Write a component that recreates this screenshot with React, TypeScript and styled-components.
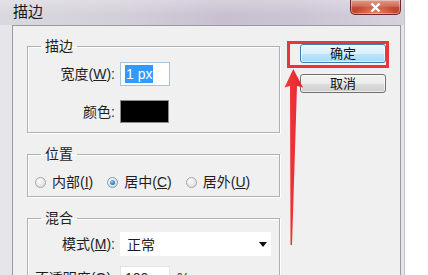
import React from 'react';
import styled, { createGlobalStyle, css } from 'styled-components';

const GlobalStyle = createGlobalStyle`
  html, body {
    margin: 0;
    padding: 0;
    background: #ffffff;
  }
  body {
    font-family: 'Liberation Sans', 'Noto Sans CJK SC', sans-serif;
    color: #1e1e1e;
  }
`;

const Page = styled.div`
  position: relative;
  width: 428px;
  height: 275px;
  overflow: hidden;
  background: #ffffff;
`;

const Window = styled.div`
  width: 404px;
  height: 300px;
  display: flex;
  flex-direction: column;
  background: #e6e5ea;
  border-right: 1px solid #c4c3cb;
`;

const TitleBar = styled.div`
  height: 26px;
  display: flex;
  align-items: flex-start;
  background:
    linear-gradient(180deg, rgba(255, 255, 255, 0.25) 0%, rgba(255, 255, 255, 0) 60%),
    linear-gradient(90deg, #d9d8df 0%, #d3cfd9 30%, #c8c0d1 55%, #cbc4d4 75%, #d6d2dd 100%);
`;

const Title = styled.div`
  padding: 3px 0 0 13px;
  font-size: 15px;
  line-height: 18px;
  color: #1a1a1a;
`;

const CloseButton = styled.div`
  margin-left: auto;
  margin-right: 3px;
  width: 49px;
  height: 14px;
  display: flex;
  align-items: center;
  justify-content: center;
  border: 1px solid #6e2a22;
  border-top: none;
  border-radius: 0 0 5px 5px;
  background:
    radial-gradient(ellipse at 50% 110%, rgba(255, 170, 120, 0.7) 0%, rgba(255, 170, 120, 0) 60%),
    linear-gradient(180deg, #dba091 0%, #cf6a55 45%, #c2452f 55%, #c24a33 100%);
  box-shadow: inset 0 0 0 1px rgba(255, 255, 255, 0.35);
`;

const Frame = styled.div`
  flex: 1;
  padding: 0 3px 0 12px;
`;

const DialogBody = styled.div`
  height: 100%;
  display: flex;
  align-items: flex-start;
  gap: 20px;
  padding: 12px 14px 0 14px;
  background: #f0f0f0;
  border: 1px solid #9a9a9e;
  box-sizing: border-box;
`;

const LeftColumn = styled.div`
  width: 254px;
  display: flex;
  flex-direction: column;
  gap: 13px;
`;

const Group = styled.fieldset<{ $pt: number; $pb: number }>`
  margin: 0;
  min-width: 0;
  padding: ${({ $pt, $pb }) => `${$pt}px 0 ${$pb}px 0`};
  border: 1px solid #b0b0b0;
  box-shadow: inset 1px 1px 0 #ffffff, 1px 1px 0 #ffffff;
`;

const Legend = styled.legend`
  margin-left: 13px;
  padding: 0 4px;
  font-size: 14px;
  line-height: 16px;
`;

const FormGrid = styled.div<{ $rowGap: number }>`
  display: grid;
  grid-template-columns: 87px auto;
  column-gap: 5px;
  row-gap: ${({ $rowGap }) => $rowGap}px;
  align-items: center;
  justify-items: start;
`;

const Label = styled.label`
  justify-self: end;
  font-size: 14px;
  line-height: 16px;
  white-space: nowrap;
`;

const TextBox = styled.div<{ $focused?: boolean }>`
  width: 50px;
  height: 24px;
  box-sizing: border-box;
  display: flex;
  align-items: center;
  padding-left: 4px;
  background: #ffffff;
  border: 1px solid ${({ $focused }) => ($focused ? '#a9c3d9' : '#e2e2e2')};
  font-size: 14px;
`;

const Selected = styled.span`
  background: #3399ff;
  color: #ffffff;
  padding: 1px 1px;
  line-height: 16px;
`;

const Swatch = styled.div`
  width: 49px;
  height: 23px;
  box-sizing: border-box;
  background: #000000;
  border: 1px solid #8c8c8c;
`;

const ValueRow = styled.div`
  display: flex;
  align-items: center;
  gap: 7px;
  font-size: 14px;
`;

const Select = styled.div`
  width: 151px;
  height: 24px;
  box-sizing: border-box;
  display: flex;
  align-items: center;
  justify-content: space-between;
  padding: 0 4px 0 7px;
  background: #ffffff;
  font-size: 14px;
`;

const Caret = styled.span`
  width: 0;
  height: 0;
  border-left: 4px solid transparent;
  border-right: 4px solid transparent;
  border-top: 5px solid #111111;
`;

const RadioRow = styled.div`
  display: flex;
  align-items: center;
  gap: 14px;
  padding-left: 7px;
  height: 16px;
`;

const RadioItem = styled.label`
  display: flex;
  align-items: center;
  gap: 6px;
  font-size: 14px;
  line-height: 16px;
  white-space: nowrap;
`;

const RadioDot = styled.span<{ $checked?: boolean }>`
  width: 11px;
  height: 11px;
  box-sizing: border-box;
  border-radius: 50%;
  border: 1px solid #a7a7a7;
  background: radial-gradient(circle at 40% 35%, #ffffff 0%, #e4e4e4 60%, #d0d0d0 100%);
  display: flex;
  align-items: center;
  justify-content: center;

  ${({ $checked }) =>
    $checked &&
    css`
      border-color: #7d9ab3;
      &::after {
        content: '';
        width: 5px;
        height: 5px;
        border-radius: 50%;
        background: radial-gradient(circle at 40% 35%, #8fd3f7 0%, #2a86c8 55%, #155c99 100%);
      }
    `}
`;

const ButtonColumn = styled.div`
  width: 86px;
  margin-top: 6px;
  display: flex;
  flex-direction: column;
  gap: 11px;
`;

const DialogButton = styled.div<{ $primary?: boolean }>`
  height: 19px;
  box-sizing: border-box;
  display: flex;
  align-items: center;
  justify-content: center;
  border-radius: 3px;
  font-size: 13px;
  line-height: 15px;
  color: #111111;
  border: 1px solid ${({ $primary }) => ($primary ? '#3c7fb1' : '#707070')};
  background: ${({ $primary }) =>
    $primary
      ? 'linear-gradient(180deg, #eaf6fd 0%, #d9f0fc 50%, #bee6fd 51%, #a7d9f5 100%)'
      : 'linear-gradient(180deg, #f2f2f2 0%, #ebebeb 50%, #dddddd 51%, #cfcfcf 100%)'};
  box-shadow: inset 0 0 0 1px rgba(255, 255, 255, 0.6);
`;

const Highlight = styled.div`
  position: absolute;
  left: 287px;
  top: 41px;
  width: 102px;
  height: 27px;
  box-sizing: border-box;
  border: 3px solid #e8363a;
  pointer-events: none;
`;

const ArrowMark = styled.svg`
  position: absolute;
  left: 278px;
  top: 64px;
  pointer-events: none;
`;

const Key = ({ children }: { children: React.ReactNode }) => <u>{children}</u>;

export default function App() {
  return (
    <>
      <GlobalStyle />
      <Page>
        <Window>
          <TitleBar>
            <Title>描边</Title>
            <CloseButton>
              <svg width="11" height="9" viewBox="0 0 11 9">
                <path d="M1.5 0.5 L9.5 8.5 M9.5 0.5 L1.5 8.5" stroke="#ffffff" strokeWidth="2.4" />
              </svg>
            </CloseButton>
          </TitleBar>
          <Frame>
            <DialogBody>
              <LeftColumn>
                <Group $pt={8} $pb={9}>
                  <Legend>描边</Legend>
                  <FormGrid $rowGap={14}>
                    <Label>
                      宽度(<Key>W</Key>):
                    </Label>
                    <TextBox $focused>
                      <Selected>1 px</Selected>
                    </TextBox>
                    <Label>颜色:</Label>
                    <Swatch />
                  </FormGrid>
                </Group>

                <Group $pt={12} $pb={6}>
                  <Legend>位置</Legend>
                  <RadioRow>
                    <RadioItem>
                      <RadioDot />
                      <span>
                        内部(<Key>I</Key>)
                      </span>
                    </RadioItem>
                    <RadioItem>
                      <RadioDot $checked />
                      <span>
                        居中(<Key>C</Key>)
                      </span>
                    </RadioItem>
                    <RadioItem>
                      <RadioDot />
                      <span>
                        居外(<Key>U</Key>)
                      </span>
                    </RadioItem>
                  </RadioRow>
                </Group>

                <Group $pt={6} $pb={8}>
                  <Legend>混合</Legend>
                  <FormGrid $rowGap={10}>
                    <Label>
                      模式(<Key>M</Key>):
                    </Label>
                    <Select>
                      <span>正常</span>
                      <Caret />
                    </Select>
                    <Label>
                      不透明度(<Key>O</Key>):
                    </Label>
                    <ValueRow>
                      <TextBox>100</TextBox>
                      <span>%</span>
                    </ValueRow>
                  </FormGrid>
                </Group>
              </LeftColumn>

              <ButtonColumn>
                <DialogButton $primary>确定</DialogButton>
                <DialogButton>取消</DialogButton>
              </ButtonColumn>
            </DialogBody>
          </Frame>
        </Window>

        <Highlight />
        <ArrowMark width="30" height="184" viewBox="278 64 30 184">
          <defs>
            <linearGradient id="arrowFill" x1="0" y1="0" x2="1" y2="0">
              <stop offset="0" stopColor="#f0393c" />
              <stop offset="1" stopColor="#e8262b" />
            </linearGradient>
          </defs>
          <polygon
            points="293.3,69 303,87.5 297,86 292,245 290.5,245 290,86 284.5,87.5"
            fill="url(#arrowFill)"
          />
        </ArrowMark>
      </Page>
    </>
  );
}
